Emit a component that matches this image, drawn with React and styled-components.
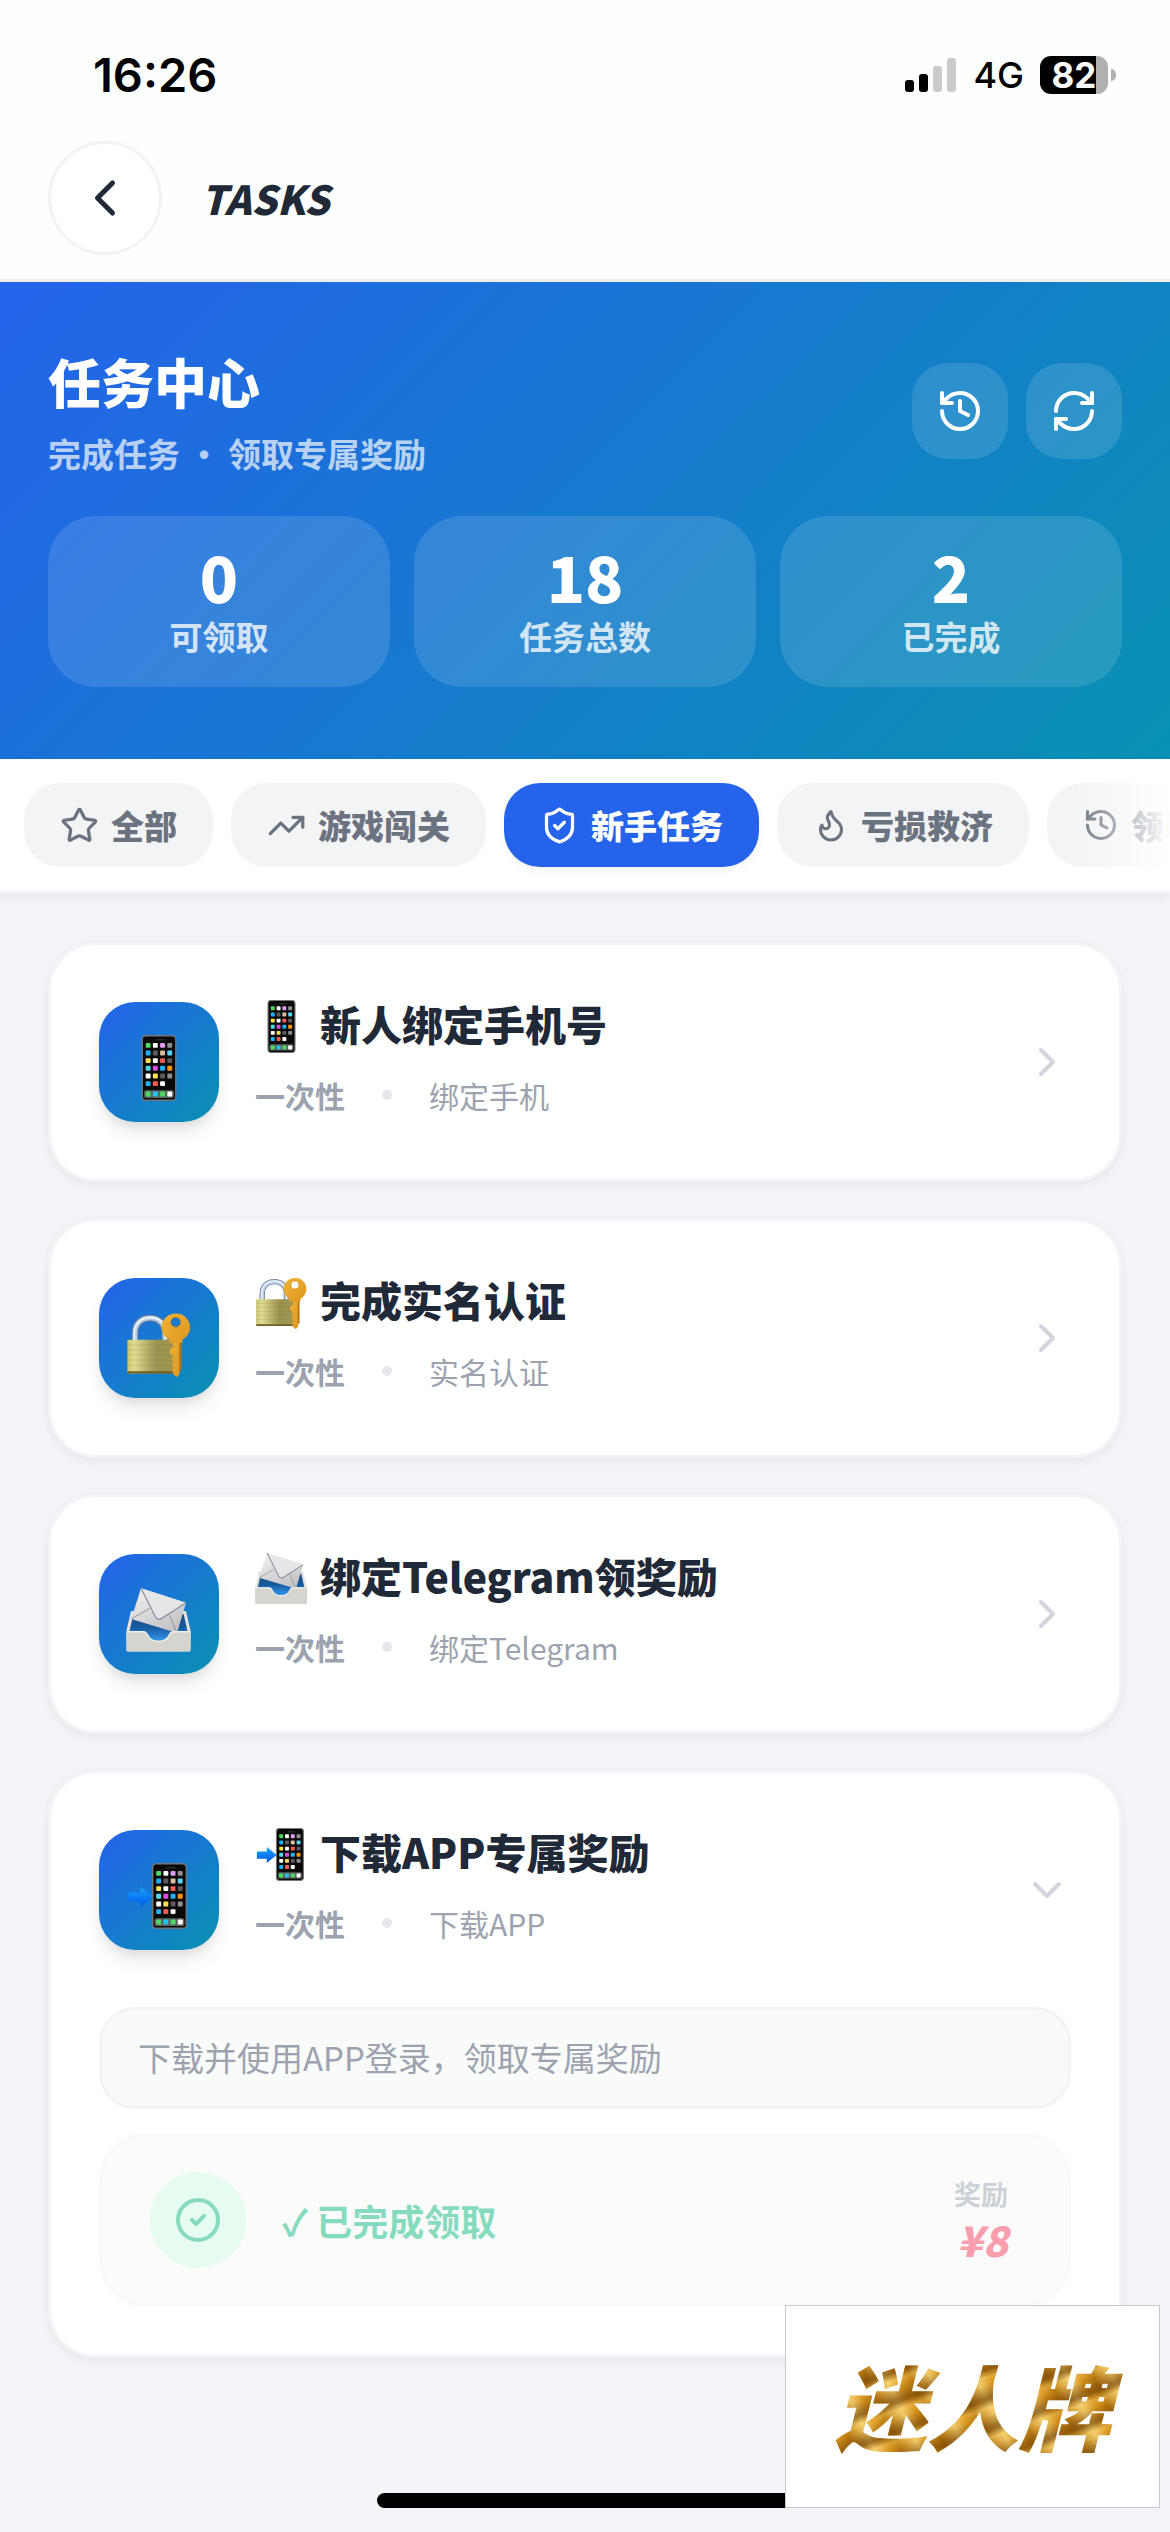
import React, { useState } from "react";
import styled, { createGlobalStyle, css } from "styled-components";
import {
  ChevronLeft,
  ChevronRight,
  ChevronDown,
  History,
  RefreshCw,
  Star,
  TrendingUp,
  ShieldCheck,
  CircleCheck,
} from "lucide-react";

const cjk = `"Noto Sans CJK SC", "Noto Sans", sans-serif`;
const latin = `Inter, "Noto Sans CJK SC", sans-serif`;

const GlobalStyle = createGlobalStyle`
  *, *::before, *::after { box-sizing: border-box; }
  body {
    margin: 0;
    background: #f3f4f8;
    font-family: ${cjk};
    color: #1f2937;
  }
  button { font: inherit; color: inherit; border: 0; background: none; padding: 0; cursor: pointer; }
  h1, h2, h3, p, ul, dl, dd { margin: 0; padding: 0; }
  svg { display: block; flex-shrink: 0; }
`;

const Page = styled.div`
  min-height: 100vh;
  overflow-x: hidden;
`;

/* status bar + navigation */

const TopBar = styled.header`
  background: #fdfffe;
  border-bottom: 3px solid #eeeff1;
`;

const StatusBar = styled.div`
  display: flex;
  align-items: center;
  justify-content: space-between;
  height: 141px;
  padding: 8px 54px 0 93px;
  font-family: ${latin};
  color: #000;
`;

const Clock = styled.time`
  font-size: 47px;
  font-weight: 600;
  line-height: 56px;
`;

const StatusIcons = styled.div`
  display: flex;
  align-items: center;
  gap: 16px;
`;

const Network = styled.span`
  font-size: 36px;
  font-weight: 500;
  line-height: 48px;
`;

const Battery = styled.div`
  display: flex;
  align-items: center;
  gap: 3px;
`;

const BatteryBody = styled.div`
  display: flex;
  align-items: center;
  justify-content: center;
  width: 68px;
  height: 38px;
  border-radius: 11px;
  background: linear-gradient(90deg, #000 0 82%, #b0b0b2 82%);
  color: #fff;
  font-size: 35px;
  font-weight: 700;
  line-height: 38px;
`;

const BatteryTip = styled.div`
  width: 5px;
  height: 12px;
  border-radius: 0 5px 5px 0;
  background: #b0b0b2;
`;

const NavRow = styled.div`
  display: flex;
  align-items: center;
  gap: 39px;
  padding: 0 48px 24px;
`;

const BackButton = styled.button`
  display: flex;
  align-items: center;
  justify-content: center;
  width: 114px;
  height: 114px;
  border: 3px solid #f3f3f4;
  border-radius: 50%;
  background: #fff;
  color: #1f2937;
`;

const NavTitle = styled.h1`
  font-size: 40px;
  font-weight: 900;
  font-style: italic;
  line-height: 60px;
`;

/* hero */

const Hero = styled.section`
  padding: 60px 48px 72px;
  background: linear-gradient(135deg, #2563eb, #0891b2);
  color: #fff;
`;

const HeroHead = styled.div`
  display: flex;
  align-items: center;
  justify-content: space-between;
  margin-bottom: 36px;
`;

const HeroTitle = styled.h2`
  font-size: 53px;
  font-weight: 900;
  line-height: 78px;
`;

const HeroSub = styled.p`
  padding-top: 6px;
  font-size: 33px;
  font-weight: 700;
  line-height: 54px;
  color: rgba(255, 255, 255, 0.7);
`;

const HeroActions = styled.div`
  display: flex;
  gap: 18px;
`;

const GlassButton = styled.button`
  display: flex;
  align-items: center;
  justify-content: center;
  width: 96px;
  height: 96px;
  border-radius: 36px;
  background: rgba(255, 255, 255, 0.12);
`;

const Stats = styled.dl`
  display: grid;
  grid-template-columns: repeat(3, 1fr);
  gap: 24px;
`;

const Stat = styled.div`
  display: flex;
  flex-direction: column-reverse;
  align-items: center;
  gap: 3px;
  padding: 27px 24px;
  border-radius: 48px;
  background: rgba(255, 255, 255, 0.12);
`;

const StatValue = styled.dd`
  font-size: 63px;
  font-weight: 900;
  line-height: 66px;
`;

const StatLabel = styled.dt`
  font-size: 33px;
  font-weight: 700;
  line-height: 48px;
  color: rgba(255, 255, 255, 0.8);
`;

/* tabs */

const TabBar = styled.nav`
  position: relative;
  background: #fff;
  border-bottom: 3px solid #f3f4f6;
  box-shadow: 0 3px 9px rgba(0, 0, 0, 0.06);

  &::after {
    content: "";
    position: absolute;
    top: 0;
    right: 0;
    bottom: 0;
    width: 96px;
    background: linear-gradient(90deg, rgba(255, 255, 255, 0), #fff);
    pointer-events: none;
  }
`;

const TabScroller = styled.div`
  display: flex;
  gap: 18px;
  padding: 24px;
  overflow: hidden;
`;

const Tab = styled.button`
  display: flex;
  flex-shrink: 0;
  align-items: center;
  gap: 12px;
  height: 84px;
  padding: 0 36px;
  border-radius: 36px;
  background: #f3f4f6;
  color: #6b7280;
  font-size: 33px;
  font-weight: 900;
  line-height: 48px;
  white-space: nowrap;

  ${({ $active }) =>
    $active &&
    css`
      background: #2563eb;
      color: #fff;
      box-shadow: 0 3px 9px rgba(0, 0, 0, 0.05);
    `}
`;

/* task cards */

const TaskList = styled.main`
  display: flex;
  flex-direction: column;
  gap: 36px;
  padding: 48px 48px 174px;
`;

const Card = styled.article`
  border: 3px solid #f3f4f6;
  border-radius: 48px;
  background: #fff;
  box-shadow: 0 3px 9px rgba(0, 0, 0, 0.06);
`;

const CardHead = styled.button`
  display: flex;
  align-items: center;
  gap: 36px;
  width: 100%;
  padding: 48px;
  text-align: left;
`;

const Tile = styled.span`
  display: flex;
  align-items: center;
  justify-content: center;
  flex-shrink: 0;
  width: 120px;
  height: 120px;
  padding-top: 12px;
  border-radius: 36px;
  background: linear-gradient(135deg, #2563eb, #0891b2);
  box-shadow: 0 12px 18px -3px rgba(0, 0, 0, 0.1), 0 6px 9px -3px rgba(0, 0, 0, 0.06);
`;

const CardText = styled.span`
  display: flex;
  flex: 1;
  flex-direction: column;
  gap: 8px;
  min-width: 0;
  padding-bottom: 2px;
`;

const CardTitle = styled.span`
  display: flex;
  align-items: center;
  gap: 12px;
  font-size: 41px;
  font-weight: 900;
  line-height: 60px;

  svg {
    margin-top: 6px;
  }
`;

const Meta = styled.span`
  display: flex;
  align-items: center;
  gap: 37px;
  font-size: 30px;
  line-height: 68px;
  color: #9ca3af;
`;

const Kind = styled.span`
  font-weight: 700;
`;

const Dot = styled.span`
  width: 10px;
  height: 10px;
  border-radius: 50%;
  background: #e5e7eb;
`;

const Arrow = styled.span`
  color: #d1d5db;
`;

const Detail = styled.div`
  display: flex;
  flex-direction: column;
  gap: 24px;
  padding: 0 48px 48px;
`;

const Description = styled.p`
  padding: 20px 36px 22px;
  border: 3px solid #f3f4f6;
  border-radius: 36px;
  background: #f9fafa;
  color: #9ca3af;
  font-size: 33px;
  line-height: 54px;
`;

const Reward = styled.div`
  display: flex;
  align-items: center;
  gap: 36px;
  padding: 36px 60px 36px 48px;
  border: 3px solid #f3f4f4;
  border-radius: 48px;
  background: #f9f9f9;
  opacity: 0.5;
`;

const RewardBadge = styled.span`
  display: flex;
  align-items: center;
  justify-content: center;
  width: 96px;
  height: 96px;
  border-radius: 50%;
  background: #d1fae5;
  color: #10b981;
`;

const RewardState = styled.span`
  flex: 1;
  font-size: 36px;
  font-weight: 700;
  line-height: 54px;
  color: #10b981;
`;

const RewardAmount = styled.span`
  display: flex;
  flex-direction: column;
  align-items: flex-end;
  padding-bottom: 4px;
`;

const RewardLabel = styled.span`
  font-size: 27px;
  font-weight: 700;
  line-height: 42px;
  color: #9ca3af;
`;

const RewardValue = styled.span`
  font-size: 42px;
  font-weight: 900;
  font-style: italic;
  line-height: 48px;
  color: #f43f5e;
`;

/* floating parts */

const HomeIndicator = styled.div`
  position: fixed;
  bottom: 24px;
  left: 50%;
  width: 416px;
  height: 15px;
  margin-left: -208px;
  border-radius: 8px;
  background: #000;
`;

const Brand = styled.aside`
  position: fixed;
  right: 10px;
  bottom: 24px;
  display: flex;
  align-items: center;
  justify-content: center;
  width: 375px;
  height: 203px;
  padding-bottom: 6px;
  border: 1px solid #c8c8c8;
  background: #fff;
`;

const BrandName = styled.strong`
  padding: 0 12px;
  font-size: 92px;
  font-weight: 900;
  font-style: italic;
  line-height: 140px;
  color: transparent;
  background:
    repeating-linear-gradient(160deg, rgba(110, 62, 4, 0.6) 0 3px, rgba(255, 214, 110, 0.35) 10px, rgba(205, 132, 20, 0.1) 17px, rgba(110, 62, 4, 0.6) 29px),
    repeating-linear-gradient(64deg, #b87a12 0, #f3cf72 17px, #d8951f 29px, #b87a12 41px);
  background-clip: text;
  -webkit-background-clip: text;
`;

/* drawings */

const SignalBars = () => (
  <svg width="52" height="34" viewBox="0 0 52 34" aria-hidden="true">
    <rect x="0" y="22" width="9" height="12" rx="3" fill="#000" />
    <rect x="14" y="16" width="9" height="18" rx="3" fill="#000" />
    <rect x="28" y="8" width="9" height="26" rx="3" fill="#cbcbcb" />
    <rect x="42" y="0" width="9" height="34" rx="3" fill="#cbcbcb" />
  </svg>
);

const Flame = ({ size = 36 }) => (
  <svg width={size} height={size} viewBox="0 0 24 24" fill="none" stroke="currentColor" strokeWidth="2" strokeLinecap="round" strokeLinejoin="round" aria-hidden="true">
    <path d="M8.5 14.5A2.5 2.5 0 0 0 11 12c0-1.38-.5-2-1-3-1.072-2.143-.224-4.054 2-6 .5 2.5 2 4.9 4 6.5 2 1.6 3 3.5 3 5.5a7 7 0 1 1-14 0c0-1.153.433-2.294 1-3a2.5 2.5 0 0 0 2.5 2.5z" />
  </svg>
);

const appColors = [
  ["#4cd964", "#ffffff", "#e39af0", "#8e8e93"],
  ["#1fb0f5", "#5b5b5f", "#d9bf9c", "#5ad4f5"],
  ["#ffe04d", "#ffffff", "#fb5b52", "#5b5b5f"],
  ["#4fd8e8", "#e04be0", "#1fb0f5", "#ff9500"],
  ["#ffffff", "#ffe04d", "#5b5b5f", "#8e8e93"],
  ["#1fb0f5", "#fb5b52", "#ffffff"],
];
const dockColors = ["#4cd964", "#1fc3f5", "#4cd964", "#ffffff"];

const Handset = ({ x }) => (
  <g transform={`translate(${x} 0)`}>
    <rect x="0.7" y="0.7" width="33.6" height="64.6" rx="3.6" fill="#0a0a0a" stroke="#77777a" strokeWidth="1.4" />
    <rect x="14" y="4" width="10" height="1.6" rx="0.8" fill="#2b2b2d" />
    <rect x="2.6" y="55.2" width="29.8" height="7.8" rx="2" fill="#5c6460" />
    {appColors.map((row, r) =>
      row.map((fill, c) => (
        <rect key={`${r}-${c}`} x={4.2 + c * 7.2} y={7.9 + r * 7.65} width="4.9" height="4.9" rx="1" fill={fill} />
      ))
    )}
    {dockColors.map((fill, c) => (
      <rect key={c} x={4.2 + c * 7.2} y="56.6" width="4.9" height="4.9" rx="1" fill={fill} />
    ))}
  </g>
);

const Phone = () => <Handset x={15.5} />;

const PhoneArrow = ({ id }) => (
  <>
    <defs>
      <linearGradient id={`${id}-arrow`} x1="0" y1="0" x2="0" y2="1">
        <stop offset="0" stopColor="#18a7fb" />
        <stop offset="1" stopColor="#0057ee" />
      </linearGradient>
    </defs>
    <Handset x={26} />
    <path d="M2.3 29.3h12.4v-5.6L27 33.7 14.7 43.7V38.3H2.3z" fill={`url(#${id}-arrow)`} />
  </>
);

const LockKey = ({ id }) => (
  <>
    <defs>
      <linearGradient id={`${id}-body`} x1="0" x2="1" y1="0" y2="0">
        <stop offset="0" stopColor="#c9c573" />
        <stop offset="0.15" stopColor="#e0dc92" />
        <stop offset="0.38" stopColor="#bdb76e" />
        <stop offset="0.62" stopColor="#9c9152" />
        <stop offset="1" stopColor="#a09651" />
      </linearGradient>
      <linearGradient id={`${id}-key`} x1="0" x2="1" y1="0" y2="1">
        <stop offset="0" stopColor="#f0b336" />
        <stop offset="1" stopColor="#dd9620" />
      </linearGradient>
    </defs>
    <path d="M9 31V22C9 12 16 7 24 7s15 5 15 15v9" fill="none" stroke="#6b7f99" strokeWidth="6.6" />
    <path d="M9 31V22C9 12 16 7 24 7s15 5 15 15v9" fill="none" stroke="#b9cfe8" strokeWidth="4.6" />
    <path d="M8.4 31V22C8.4 11.6 16 6.4 24 6.4s15.6 5 15.6 15v9" fill="none" stroke="#eef5fd" strokeWidth="1.6" />
    <rect x="1.4" y="28.8" width="46.6" height="33.6" rx="1.4" fill={`url(#${id}-body)`} />
    <path d="M1.4 34h46.6M1.4 39h46.6M1.4 44h46.6M1.4 49h46.6M1.4 54h46.6" stroke="#7d7438" strokeOpacity="0.3" strokeWidth="0.7" />
    <rect x="1.4" y="60.2" width="46.6" height="2.2" rx="1" fill="#6e5f26" />
    <path d="M47.2 28v8.4c-2 .2-3.6 1.8-3.6 4s1.6 3.8 3.6 4v2.4l-2 1.4 2 1.6v2.6l-2 1.6 2 1.6v2.2l-1.6 1.8 1.6 1.6v2l3.4 3 3-3V28z" fill={`url(#${id}-key)`} />
    <path d="M53.3 30h2.2v28l-2.2 3z" fill="#b97412" />
    <path d="M50 2.4c8 0 14 6 14 13.6 0 6-3.4 10.4-7.4 12.4V31c0 1.4-13.6 1.4-13.6 0v-2.6C39 26.4 35.6 22 35.6 16 35.6 8.4 42 2.4 50 2.4z" fill={`url(#${id}-key)`} />
    <circle cx="49.7" cy="11.2" r="5" fill={id.endsWith("tile") ? "#1778cd" : "#fff"} stroke="#c98518" strokeWidth="0.8" />
  </>
);

const Inbox = ({ id }) => (
  <>
    <defs>
      <linearGradient id={`${id}-env`} x1="0" x2="0.6" y1="0" y2="1">
        <stop offset="0" stopColor="#f4f4f5" />
        <stop offset="1" stopColor="#c3c3c6" />
      </linearGradient>
      <linearGradient id={`${id}-in`} x1="0" x2="0" y1="0" y2="1">
        <stop offset="0" stopColor="#1c4d80" />
        <stop offset="0.5" stopColor="#165a9e" />
        <stop offset="1" stopColor="#3498f0" />
      </linearGradient>
    </defs>
    <path d="M5 24h55l4.6 20v10H.4V44z" fill="#e4e3df" />
    <path d="M7.4 27h50.2l4 17.5V54H3.4v-9.5z" fill={`url(#${id}-in)`} />
    <path d="M15 1.2 60 15.7 51 45.9 5.3 32z" fill={`url(#${id}-env)`} />
    <path d="M5.3 32 23.5 21.5M51 45.9 43.5 28" fill="none" stroke="#92959c" strokeWidth="1" />
    <path d="M15 1.2 29.5 30c1.4 2.6 4 3 6.2 1.4L60 15.7z" fill="#e6e6e8" />
    <path d="M15 1.2 29.5 30c1.4 2.6 4 3 6.2 1.4L60 15.7" fill="none" stroke="#8d929c" strokeWidth="1.3" />
    <path d="M1.6 44H17c2.6 0 3.6 1.4 4.8 3.8 1.8 3.6 5.4 6 10.6 6s8.8-2.4 10.6-6c1.2-2.4 2.2-3.8 4.8-3.8h15.6c1 0 1.4.6 1.4 1.4v17.4c0 1.2-.8 2-2 2H2.2c-1.2 0-2-.8-2-2V45.4c0-.8.4-1.4 1.4-1.4z" fill="#d5d4cf" />
    <path d="M1.6 44.7H17c2.6 0 3.6 1.4 4.8 3.8 1.8 3.6 5.4 6 10.6 6s8.8-2.4 10.6-6c1.2-2.4 2.2-3.8 4.8-3.8h15.6" fill="none" stroke="#f1f0ec" strokeWidth="1.4" />
  </>
);

const drawings = { phone: Phone, lock: LockKey, inbox: Inbox, download: PhoneArrow };

const Emoji = ({ name, size, id }) => {
  const Drawing = drawings[name];
  return (
    <svg width={size} height={size} viewBox="0 0 66 66" aria-hidden="true">
      <Drawing id={id} />
    </svg>
  );
};

/* data */

const tabs = [
  { id: "all", label: "全部", Icon: Star, size: 39 },
  { id: "game", label: "游戏闯关", Icon: TrendingUp, size: 39 },
  { id: "newbie", label: "新手任务", Icon: ShieldCheck, size: 39 },
  { id: "relief", label: "亏损救济", Icon: Flame, size: 36 },
  { id: "records", label: "领取记录", Icon: History, size: 36 },
];

const stats = [
  { label: "可领取", value: 0 },
  { label: "任务总数", value: 18 },
  { label: "已完成", value: 2 },
];

const tasks = [
  { id: "phone", title: "新人绑定手机号", type: "绑定手机" },
  { id: "lock", title: "完成实名认证", type: "实名认证" },
  { id: "inbox", title: "绑定Telegram领奖励", type: "绑定Telegram" },
  {
    id: "download",
    title: "下载APP专属奖励",
    type: "下载APP",
    description: "下载并使用APP登录，领取专属奖励",
    reward: "¥8",
  },
];

function TaskCard({ task, open, onToggle }) {
  return (
    <Card>
      <CardHead type="button" aria-expanded={open} onClick={onToggle}>
        <Tile>
          <Emoji name={task.id} size={66} id={`${task.id}-tile`} />
        </Tile>
        <CardText>
          <CardTitle>
            <Emoji name={task.id} size={53} id={`${task.id}-title`} />
            <span>{task.title}</span>
          </CardTitle>
          <Meta>
            <Kind>一次性</Kind>
            <Dot />
            <span>{task.type}</span>
          </Meta>
        </CardText>
        <Arrow>{open ? <ChevronDown size={48} /> : <ChevronRight size={48} />}</Arrow>
      </CardHead>
      {open && task.description && (
        <Detail>
          <Description>{task.description}</Description>
          <Reward>
            <RewardBadge>
              <CircleCheck size={48} />
            </RewardBadge>
            <RewardState>✓ 已完成领取</RewardState>
            <RewardAmount>
              <RewardLabel>奖励</RewardLabel>
              <RewardValue>{task.reward}</RewardValue>
            </RewardAmount>
          </Reward>
        </Detail>
      )}
    </Card>
  );
}

export default function App() {
  const [tab, setTab] = useState("newbie");
  const [openTask, setOpenTask] = useState("download");

  return (
    <Page>
      <GlobalStyle />
      <TopBar>
        <StatusBar>
          <Clock>16:26</Clock>
          <StatusIcons>
            <SignalBars />
            <Network>4G</Network>
            <Battery>
              <BatteryBody>82</BatteryBody>
              <BatteryTip />
            </Battery>
          </StatusIcons>
        </StatusBar>
        <NavRow>
          <BackButton type="button" aria-label="返回">
            <ChevronLeft size={60} strokeWidth={2} />
          </BackButton>
          <NavTitle>TASKS</NavTitle>
        </NavRow>
      </TopBar>

      <Hero>
        <HeroHead>
          <div>
            <HeroTitle>任务中心</HeroTitle>
            <HeroSub>完成任务 • 领取专属奖励</HeroSub>
          </div>
          <HeroActions>
            <GlassButton type="button" aria-label="领取记录">
              <History size={48} />
            </GlassButton>
            <GlassButton type="button" aria-label="刷新">
              <RefreshCw size={48} />
            </GlassButton>
          </HeroActions>
        </HeroHead>
        <Stats>
          {stats.map((s) => (
            <Stat key={s.label}>
              <StatLabel>{s.label}</StatLabel>
              <StatValue>{s.value}</StatValue>
            </Stat>
          ))}
        </Stats>
      </Hero>

      <TabBar>
        <TabScroller>
          {tabs.map(({ id, label, Icon, size }) => (
            <Tab key={id} type="button" $active={tab === id} aria-pressed={tab === id} onClick={() => setTab(id)}>
              <Icon size={size} />
              {label}
            </Tab>
          ))}
        </TabScroller>
      </TabBar>

      <TaskList>
        {tasks.map((task) => (
          <TaskCard
            key={task.id}
            task={task}
            open={openTask === task.id}
            onToggle={() => setOpenTask(openTask === task.id ? null : task.id)}
          />
        ))}
      </TaskList>

      <HomeIndicator />
      <Brand>
        <BrandName>迷人牌</BrandName>
      </Brand>
    </Page>
  );
}
